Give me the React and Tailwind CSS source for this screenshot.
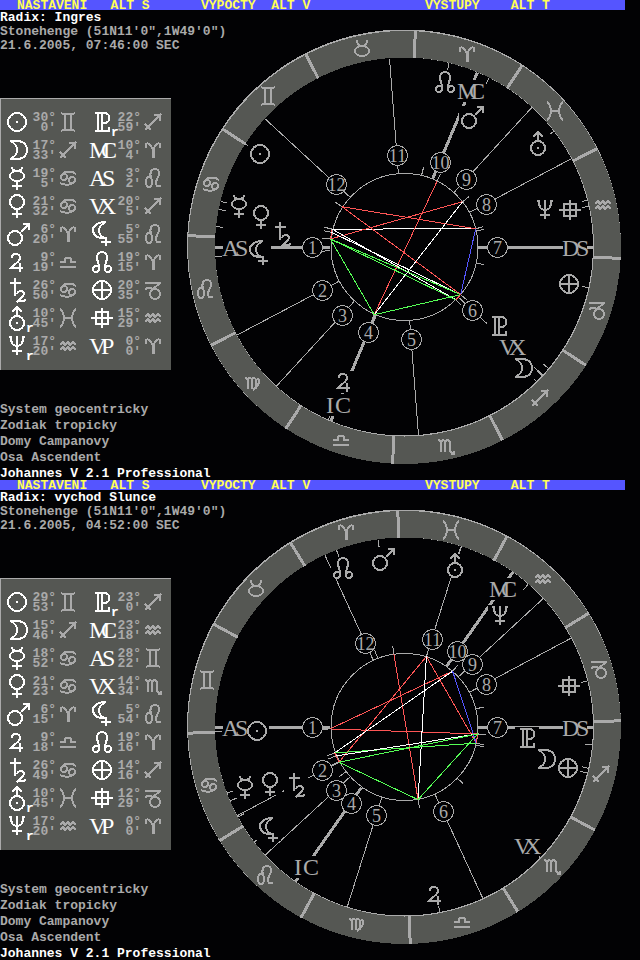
const SHAPES = {
  sun: 'M-9 0a9 9 0 1 0 18 0a9 9 0 1 0 -18 0M-1 0h2',
  moon: 'M-7 -9H2C7 -8 10 -5 10 0C10 5 7 8 2 9H-7C-2 7 0 4 0 0C0 -4 -2 -7 -7 -9Z',
  mercury: 'M-7 -2a7 5 0 1 0 14 0a7 5 0 1 0 -14 0M-5 -11C-5 -8 -3 -7 0 -7C3 -7 5 -8 5 -11M0 3V12M-5 8H5',
  venus: 'M-7 -4a7 7 0 1 0 14 0a7 7 0 1 0 -14 0M0 3V12M-5 8H5',
  mars: 'M-9 4a7 7 0 1 0 14 0a7 7 0 1 0 -14 0M4 -2L12 -10M6 -10H12V-4',
  jupiter: 'M-5 -4C-6 -9 3 -10 3 -4C3 0 -3 2 -6 6H6M3 1V10',
  saturn: 'M-2 -12V6M-7 -7H4M0 4C1 0 7 0 7 4C7 7 3 8 0 12C3 9 5 12 9 10',
  uranus: 'M-7 5a7 7 0 1 0 14 0a7 7 0 1 0 -14 0M-1 5h2M0 -2V-11M-5 -6L0 -11L5 -6',
  neptune: 'M-8 -9H-5M5 -9H8M-6 -9C-6 -2 -4 0 0 0C4 0 6 -2 6 -9M0 -10V9M-5 5H5',
  pluto: 'M-7 -9H2C9 -9 9 1 2 1H0M-4 -9V9M0 -9V9M-7 9H7V5',
  lilith: 'M4 -12C-5 -12 -9 -8 -9 -4C-9 1 -5 4 2 4C-5 0 -5 -8 4 -12ZM4 3V12M-1 8H9',
  node: 'M-3 7a3 3 0 1 0 -6 0a3 3 0 1 0 6 0C-2 3 -5 -1 -5 -4C-5 -12 5 -12 5 -4C5 -1 2 3 3 7a3 3 0 1 0 6 0a3 3 0 1 0 -6 0',
  fortune: 'M-9 0a9 9 0 1 0 18 0a9 9 0 1 0 -18 0M-9 0H9M0 -9V9',
  east: 'M-6 -6H6V6H-6ZM-11 0H11M0 -10V10',
  aries: 'M-7 -2C-9 -9 -2 -8 0 1C2 -8 9 -9 7 -2M-0.5 -1V8M0.5 -1V8',
  taurus: 'M-7 3a7 5 0 1 0 14 0a7 5 0 1 0 -14 0M-5 -8C-5 -4 -3 -2 0 -2C3 -2 5 -4 5 -8',
  gemini: 'M-7 -9C-4 -7 4 -7 7 -9M-7 9C-4 7 4 7 7 9M-3 -7V7M3 -7V7',
  cancer: 'M-7 -1a3 3 0 1 0 6 0a3 3 0 1 0 -6 0C-6 -7 3 -8 8 -4M7 2a3 3 0 1 0 -6 0a3 3 0 1 0 6 0C6 7 -3 8 -8 5',
  leo: 'M-7 4a3 5 0 1 0 6 0a3 5 0 1 0 -6 0M-2 0C-4 -6 -1 -9 2 -9C7 -9 7 -3 4 1C2 5 3 10 8 8',
  virgo: 'M-8 -5L-5 -4V6M-5 -4C-3 -6 -1 -5 -1 -2V6M-1 -4C1 -6 3 -5 3 -2V6M3 -3C8 -6 8 1 0 7',
  libra: 'M-8 5H8M-8 0H-3C-6 -6 6 -6 3 0H8',
  scorpio: 'M-8 -6L-5 -5V6M-5 -4C-3 -7 -1 -6 -1 -3V6M-1 -4C1 -7 4 -6 4 -3V5L8 8M8 5V8H5',
  sagittarius: 'M-8 8L8 -8M1 -7H7V-1M-8 2L-2 8',
  capricorn: 'M-8 -7H8M7 -7L0 -1M-8 -1C-4 -3 -1 -1 2 -1M-3 4a5 5 0 1 0 10 0a5 5 0 1 0 -10 0',
  aquarius: 'M-8 -1L-5 -4L-3 -1L0 -4L2 -1L5 -4L8 -1M-8 4L-5 1L-3 4L0 1L2 4L5 1L8 4',
  pisces: 'M-8 -9C-3 -5 -3 5 -8 9M8 -9C3 -5 3 5 8 9M-4 0H4',
};

const SIGNS = ['aries', 'taurus', 'gemini', 'cancer', 'leo', 'virgo', 'libra', 'scorpio', 'sagittarius', 'capricorn', 'aquarius', 'pisces'];

// Start of the second letter, measured from the start of the first one.
const PAIRS = { MC: 12, AS: 13, VX: 10, VP: 12, DS: 14, IC: 9 };

function Glyph({ name }) {
  if (name in PAIRS) {
    return (
      <g fill="currentColor" className="font-['Liberation_Serif',serif] text-[24px] font-normal">
        <text x={-13} y={8}>{name[0]}</text>
        <text x={PAIRS[name] - 13} y={8}>{name[1]}</text>
      </g>
    );
  }
  return <path d={SHAPES[name]} fill="none" stroke="currentColor" strokeWidth={2} />;
}

const CX = 404;
const CY = 247;

function at(angle, r) {
  const a = (angle * Math.PI) / 180;
  return [CX + r * Math.cos(a), CY - r * Math.sin(a)];
}

function Ray({ angle, from, to, width = 1 }) {
  const [x1, y1] = at(angle, from);
  const [x2, y2] = at(angle, to);
  return <line x1={x1} y1={y1} x2={x2} y2={y2} stroke="#aaaaaa" strokeWidth={width} />;
}

const INK = { r: '#ff5555', g: '#55ff55', b: '#5555ff', w: '#ffffff' };

function Wheel({ chart }) {
  const angleOf = (lon) => 180 + lon - chart.asc;
  return (
    <svg viewBox="180 10 460 470" role="img" aria-label={chart.title} className="block h-auto min-w-0 flex-1 text-[#aaaaaa]" shapeRendering="crispEdges">
      <circle cx={CX} cy={CY - 0.5} r={217} fill="#aaaaaa" />
      <circle cx={CX + 0.5} cy={CY + 0.5} r={216.5} fill="#555753" />
      <circle cx={CX + 0.5} cy={CY} r={189.5} fill="#aaaaaa" />
      <circle cx={CX} cy={CY - 0.5} r={189} fill="#020204" />
      {SIGNS.map((sign, i) => {
        const [x, y] = at(angleOf(i * 30 + 15), 203);
        return (
          <g key={sign}>
            <Ray angle={angleOf(i * 30)} from={189} to={217} width={3} />
            <g transform={`translate(${Math.round(x)} ${Math.round(y)})`}><Glyph name={sign} /></g>
          </g>
        );
      })}
      <circle cx={CX + 0.5} cy={CY} r={73.5} fill="none" stroke="#aaaaaa" />
      {chart.cusps.map((angle, i) => (
        <Ray key={i} angle={angle} from={74} to={189} width={i % 3 === 0 ? 3 : 1} />
      ))}
      {Object.entries(chart.bodies).map(([name, [lon]]) => (
        <g key={name}>
          <Ray angle={angleOf(lon)} from={74} to={82} />
          <Ray angle={angleOf(lon)} from={182} to={189} />
        </g>
      ))}
      {chart.aspects.map(([a, b, ink], i) => {
        const [x1, y1] = at(angleOf(chart.bodies[a][0]), 74);
        const [x2, y2] = at(angleOf(chart.bodies[b][0]), 74);
        return <line key={i} x1={x1} y1={y1} x2={x2} y2={y2} stroke={INK[ink]} />;
      })}
      {chart.cusps.map((angle, i) => {
        const [px, py] = at(angle, 92.5);
        const x = Math.round(px) + 0.5;
        const y = Math.round(py) + 0.5;
        return (
          <g key={i}>
            <circle cx={x} cy={y} r={10} fill="#020204" stroke="#aaaaaa" />
            <text x={x} y={y + 6} textAnchor="middle" fill="currentColor" className="font-['Liberation_Serif',serif] text-[18px] font-normal">{i + 1}</text>
          </g>
        );
      })}
      {[...Object.entries(chart.bodies).map(([name, [, x, y]]) => [name, x, y]), ...chart.axes].map(([name, x, y]) => (
        <g key={name} transform={`translate(${x} ${y})`}>
          <rect x={-12} y={-11} width={24} height={22} fill="#020204" />
          <Glyph name={name} />
        </g>
      ))}
    </svg>
  );
}

function Cells({ entry }) {
  const [name, deg, min, sign, retro] = entry;
  return (
    <>
      <td className="p-0 text-white">
        <svg viewBox="-15 -14 30 28" className="mx-auto block h-7 w-[30px] overflow-visible" shapeRendering="crispEdges" role="img" aria-label={name}>
          <Glyph name={name} />
          {retro && <text x={9} y={14} fill="currentColor" className="font-['Liberation_Mono',monospace] text-[13px] font-bold">r</text>}
        </svg>
      </td>
      <td className="px-0 pt-0.5 pb-0 text-right leading-[10px]">{deg}°<br />{min}'</td>
      <td className="p-0">
        <svg viewBox="-12 -14 24 28" className="block h-7 w-6 overflow-visible" shapeRendering="crispEdges" role="img" aria-label={sign}>
          <Glyph name={sign} />
        </svg>
      </td>
    </>
  );
}

function Positions({ rows }) {
  return (
    <div className="mt-[45px] w-[171px] border-t border-l border-[#aaaaaa] bg-[#555753] pt-[9px] pb-[10px]">
      <table className="w-[164px] table-fixed border-collapse">
        <colgroup>
          <col className="w-[31px]" /><col className="w-6" /><col className="w-6" /><col className="w-[6px]" />
          <col className="w-[31px]" /><col className="w-6" /><col className="w-6" />
        </colgroup>
        <tbody>
          {rows.map(([left, right]) => (
            <tr key={left[0]} className="h-7">
              <Cells entry={left} />
              <td className="p-0" />
              <Cells entry={right} />
            </tr>
          ))}
        </tbody>
      </table>
    </div>
  );
}

function Screen({ chart }) {
  return (
    <section>
      <nav className="mr-[15px] grid h-[10px] grid-cols-[184px_224px_1fr] bg-[#5555ff] pl-[17px] leading-3 text-[#ffff55]">
        <button type="button" className="text-left whitespace-pre">{'NASTAVENI   ALT S'}</button>
        <button type="button" className="text-left whitespace-pre">{'VYPOCTY  ALT V'}</button>
        <button type="button" className="text-left whitespace-pre">{'VYSTUPY    ALT T'}</button>
      </nav>
      <div className="flex">
        <div className="w-[180px] shrink-0 pt-px leading-[14px] whitespace-nowrap">
          <h2 className="text-white">Radix: {chart.title}</h2>
          <p>Stonehenge (51N11'0",1W49'0")</p>
          <p>{chart.date}</p>
          <Positions rows={chart.rows} />
          <div className="mt-8 leading-4">
            <p>System geocentricky</p>
            <p>Zodiak tropicky</p>
            <p>Domy Campanovy</p>
            <p>Osa Ascendent</p>
            <p className="h-[14px] text-white">Johannes V 2.1 Professional</p>
          </div>
        </div>
        <Wheel chart={chart} />
      </div>
    </section>
  );
}

const INGRES = {
  title: 'Ingres',
  date: '21.6.2005, 07:46:00 SEC',
  asc: 123.03,
  cusps: [180, 207.8, 227.5, 247.2, 274.4, 317.3, 0, 27.8, 47.5, 67.2, 94.4, 137.3],
  bodies: {
    sun: [89.99, 260, 154], mercury: [109.08, 239, 206], venus: [111.53, 261, 217], saturn: [116.83, 282, 234],
    node: [19.25, 445, 82], mars: [6.33, 471, 117], uranus: [340.75, 538, 143], neptune: [317.33, 545, 210],
    east: [315.48, 570, 210], fortune: [290.58, 569, 284], pluto: [262.98, 499, 326], VX: [260.08, 512, 347],
    moon: [257.55, 522, 368], jupiter: [189.32, 344, 382], lilith: [125.92, 259, 253],
  },
  axes: [['AS', 235, 248], ['MC', 470, 91], ['DS', 575, 248], ['IC', 339, 405]],
  aspects: [
    ['mercury', 'neptune', 'w'], ['sun', 'neptune', 'r'], ['sun', 'pluto', 'r'], ['uranus', 'saturn', 'r'],
    ['mars', 'jupiter', 'r'], ['uranus', 'jupiter', 'w'], ['neptune', 'pluto', 'b'], ['mercury', 'saturn', 'r'],
    ['mercury', 'moon', 'w'], ['venus', 'pluto', 'w'], ['saturn', 'pluto', 'g'], ['saturn', 'moon', 'g'],
    ['saturn', 'jupiter', 'g'], ['jupiter', 'pluto', 'g'], ['moon', 'pluto', 'r'],
  ],
  rows: [
    [['sun', 30, 0, 'gemini'], ['pluto', 22, 59, 'sagittarius', true]],
    [['moon', 17, 33, 'sagittarius'], ['MC', 10, 4, 'aries']],
    [['mercury', 19, 5, 'cancer'], ['AS', 3, 2, 'leo']],
    [['venus', 21, 32, 'cancer'], ['VX', 20, 5, 'sagittarius']],
    [['mars', 6, 20, 'aries'], ['lilith', 5, 55, 'leo']],
    [['jupiter', 9, 19, 'libra'], ['node', 19, 15, 'aries']],
    [['saturn', 26, 50, 'cancer'], ['fortune', 20, 35, 'capricorn']],
    [['uranus', 10, 45, 'pisces', true], ['east', 15, 29, 'aquarius']],
    [['neptune', 17, 20, 'aquarius', true], ['VP', 0, 0, 'aries']],
  ],
};

const SUNRISE = {
  title: 'vychod Slunce',
  date: '21.6.2005, 04:52:00 SEC',
  asc: 88.37,
  cusps: [180, 208, 222.7, 234.9, 252.5, 294.7, 0, 28, 42.7, 54.9, 72.5, 114.7],
  bodies: {
    sun: [89.88, 257, 251], mercury: [108.87, 245, 307], venus: [111.38, 270, 304], saturn: [116.82, 296, 305],
    node: [19.27, 343, 88], mars: [6.25, 382, 79], uranus: [340.75, 455, 85], neptune: [317.33, 500, 136],
    east: [282.48, 569, 206], fortune: [254.27, 568, 288], pluto: [263, 527, 258], VX: [224.57, 527, 366],
    moon: [255.77, 545, 279], jupiter: [189.3, 435, 415], lilith: [125.9, 269, 350],
  },
  axes: [['AS', 235, 248], ['MC', 502, 109], ['DS', 575, 248], ['IC', 307, 387]],
  aspects: [
    ['mars', 'jupiter', 'r'], ['sun', 'neptune', 'r'], ['uranus', 'saturn', 'r'], ['uranus', 'moon', 'r'],
    ['sun', 'pluto', 'r'], ['neptune', 'mercury', 'w'], ['uranus', 'jupiter', 'w'], ['neptune', 'moon', 'b'],
    ['mercury', 'saturn', 'r'], ['moon', 'pluto', 'r'], ['mercury', 'moon', 'g'], ['venus', 'pluto', 'w'],
    ['saturn', 'pluto', 'g'], ['saturn', 'jupiter', 'g'], ['jupiter', 'pluto', 'g'],
  ],
  rows: [
    [['sun', 29, 53, 'gemini'], ['pluto', 23, 0, 'sagittarius', true]],
    [['moon', 15, 46, 'sagittarius'], ['MC', 23, 18, 'aquarius']],
    [['mercury', 18, 52, 'cancer'], ['AS', 28, 22, 'gemini']],
    [['venus', 21, 23, 'cancer'], ['VX', 14, 34, 'scorpio']],
    [['mars', 6, 15, 'aries'], ['lilith', 5, 54, 'leo']],
    [['jupiter', 9, 18, 'libra'], ['node', 19, 16, 'aries']],
    [['saturn', 26, 49, 'cancer'], ['fortune', 14, 16, 'sagittarius']],
    [['uranus', 10, 45, 'pisces', true], ['east', 12, 29, 'capricorn']],
    [['neptune', 17, 20, 'aquarius', true], ['VP', 0, 0, 'aries']],
  ],
};

export default function App() {
  return (
    <main className="min-h-screen bg-[#020204] font-['Liberation_Mono',monospace] text-[13px] font-bold text-[#aaaaaa]">
      <Screen chart={INGRES} />
      <Screen chart={SUNRISE} />
    </main>
  );
}
